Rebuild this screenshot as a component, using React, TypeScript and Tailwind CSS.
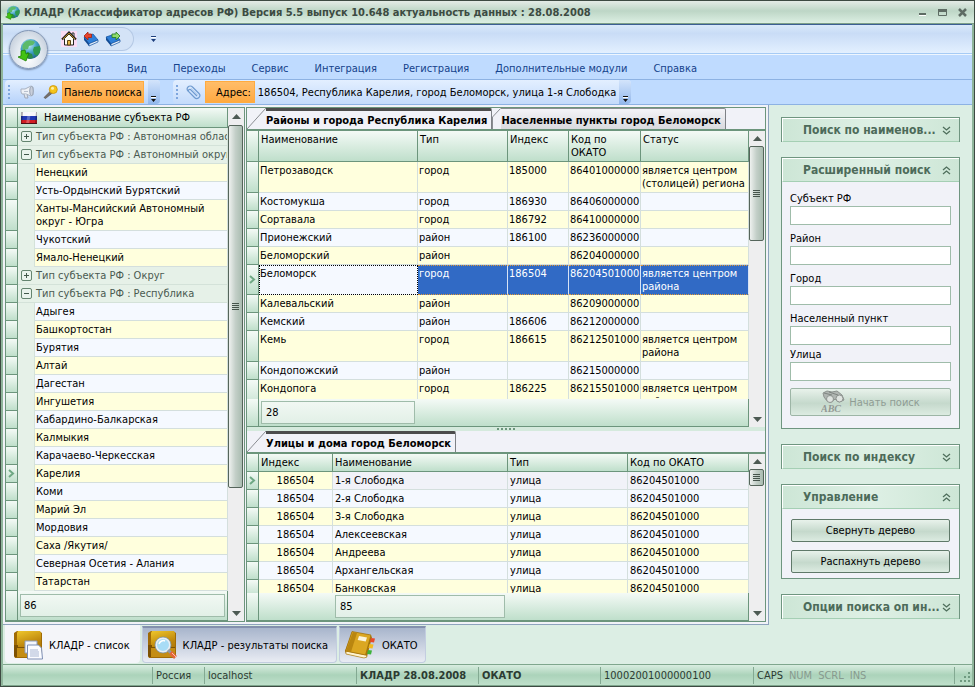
import type { ReactNode } from "react";
import clsx from "clsx";

const MENU = [
  "Работа",
  "Вид",
  "Переходы",
  "Сервис",
  "Интеграция",
  "Регистрация",
  "Дополнительные модули",
  "Справка",
];

type TreeRow = { group?: boolean; open?: boolean; current?: boolean; name: string };

const TREE: TreeRow[] = [
  { group: true, name: "Тип субъекта РФ : Автономная область" },
  { group: true, open: true, name: "Тип субъекта РФ : Автономный округ" },
  { name: "Ненецкий" },
  { name: "Усть-Ордынский Бурятский" },
  { name: "Ханты-Мансийский Автономный округ - Югра" },
  { name: "Чукотский" },
  { name: "Ямало-Ненецкий" },
  { group: true, name: "Тип субъекта РФ : Округ" },
  { group: true, open: true, name: "Тип субъекта РФ : Республика" },
  { name: "Адыгея" },
  { name: "Башкортостан" },
  { name: "Бурятия" },
  { name: "Алтай" },
  { name: "Дагестан" },
  { name: "Ингушетия" },
  { name: "Кабардино-Балкарская" },
  { name: "Калмыкия" },
  { name: "Карачаево-Черкесская" },
  { name: "Карелия", current: true },
  { name: "Коми" },
  { name: "Марий Эл" },
  { name: "Мордовия" },
  { name: "Саха /Якутия/" },
  { name: "Северная Осетия - Алания" },
  { name: "Татарстан" },
  { name: "" },
];

const CITIES = [
  ["Петрозаводск", "город", "185000", "86401000000", "является центром (столицей) региона"],
  ["Костомукша", "город", "186930", "86406000000", ""],
  ["Сортавала", "город", "186792", "86410000000", ""],
  ["Прионежский", "район", "186100", "86236000000", ""],
  ["Беломорский", "район", "", "86204000000", ""],
  ["Беломорск", "город", "186504", "86204501000", "является центром района"],
  ["Калевальский", "район", "", "86209000000", ""],
  ["Кемский", "район", "186606", "86212000000", ""],
  ["Кемь", "город", "186615", "86212501000", "является центром района"],
  ["Кондопожский", "район", "", "86215000000", ""],
  ["Кондопога", "город", "186225", "86215501000", "является центром района"],
];
const SELECTED_CITY = 5;

const STREETS = [
  "1-я Слободка",
  "2-я Слободка",
  "3-я Слободка",
  "Алексеевская",
  "Андреева",
  "Архангельская",
  "Банковская",
];

const HEAD = "bg-linear-to-b from-[#f4faf6] to-[#bfdfcb] border-[#6c957c]";

/* ---------- icons ---------- */

function Globe({ size }: { size: number }) {
  return (
    <svg width={size} height={size} viewBox="0 0 24 24" aria-hidden="true">
      <defs>
        <radialGradient id="sea" cx="0.4" cy="0.3" r="0.8">
          <stop offset="0" stopColor="#c8f0fa" />
          <stop offset="0.5" stopColor="#3f9fc4" />
          <stop offset="1" stopColor="#17577c" />
        </radialGradient>
      </defs>
      <circle cx="13.500" cy="11" r="10" fill="url(#sea)" />
      <path d="M7 5c3-4 8-3 11-1l-2 3-4 1-1 3-5 1c-1-3-1-5 1-7z" fill="#5cba6a" />
      <path d="M17 9l6-1c1 4 0 7-3 10l-3-2-1-4z" fill="#2f9a50" />
      <path d="M10 14l5 2 1 4-4 1-3-2z" fill="#2a8a49" />
      <path d="M4 13l4-1 1 4 3-1-3 8-8-4 3-1z" fill="#43c312" stroke="#208205" strokeWidth="0.8" />
    </svg>
  );
}

function HomeIcon() {
  return (
    <svg width="16" height="16" viewBox="0 0 16 16" aria-hidden="true">
      <path fill="#fadcf4" d="M0 0h16v16H0z" />
      <path d="M11 2h2v4h-2z" fill="#fff" stroke="#333" />
      <path d="M3.5 7.500L8 3l4.500 4.500v6.500h-9z" fill="#fffdf2" stroke="#222" />
      <path d="M1 8.500L8 1.500l7 7" fill="none" stroke="#222" strokeWidth="2" />
      <path d="M2 8.200L8 2.200l6 6" fill="none" stroke="#d39b25" strokeWidth="1" />
      <path d="M6.500 9.500h3V14h-3z" fill="#e8b74a" stroke="#5c4212" />
    </svg>
  );
}

function BookIcon({ forward }: { forward?: boolean }) {
  return (
    <svg width="16" height="16" viewBox="0 0 16 16" aria-hidden="true">
      <path d="M1 6l9-3 5 6-9 4z" fill="#2e7fd8" stroke="#0f4d9c" strokeWidth="0.7" />
      <path d="M1 6v3l5 6v-2.500z" fill="#124a93" />
      <path d="M6 12.700L15 9v2l-9 4z" fill="#e9f1fb" stroke="#0f4d9c" strokeWidth="0.7" />
      {forward ? (
        <path d="M7 3h4V1l4 4-4 4V6.500H7z" fill="#8fdc6d" stroke="#257c1d" strokeWidth="0.8" />
      ) : (
        <path d="M8.500 3H5V1L1 5l4 4V6.500h3.500z" fill="#e8432a" stroke="#a3230f" strokeWidth="0.8" />
      )}
    </svg>
  );
}

function MegaphoneIcon() {
  return (
    <svg width="15" height="14" viewBox="0 0 15 14" aria-hidden="true">
      <path d="M1 4h4l6-3 2 1v8l-2 1-5-2H2L1 7z" fill="#eef1f6" stroke="#a9b2c1" />
      <path d="M4 9l1 4h3L7 9.500" fill="#dfe4ec" stroke="#a0a9b9" />
      <ellipse cx="11.500" cy="6" rx="1.800" ry="4.500" fill="#c9cfdb" stroke="#98a3b5" />
      <path d="M4 6.500h4" stroke="#b9c1ce" />
    </svg>
  );
}

function MicrophoneIcon() {
  return (
    <svg width="15" height="15" viewBox="0 0 15 15" aria-hidden="true">
      <path d="M8 5.500l2 2L2.500 13.500 1 12.500z" fill="#77706a" stroke="#4b4540" strokeWidth="0.6" />
      <circle cx="10.300" cy="4.500" r="4" fill="#f4c51d" stroke="#cc9209" strokeWidth="0.8" />
      <circle cx="9.500" cy="3.300" r="1.500" fill="#fff0a4" />
    </svg>
  );
}

function ClipIcon() {
  return (
    <svg width="15" height="15" viewBox="0 0 15 15" aria-hidden="true">
      <path
        d="M11 11L4.500 4.500a1.500 1.500 0 0 0-2 2l6 6a3 3 0 0 0 4.500-4L6.500 2a3 3 0 0 0-4.500 0 3 3 0 0 0 0 4"
        fill="none"
        stroke="#6f9bd0"
        strokeWidth="1.200"
      />
      <path d="M5 3l7 7" stroke="#b9d3f0" />
    </svg>
  );
}

function FlagIcon() {
  return (
    <svg width="16" height="12" viewBox="0 0 16 12" aria-hidden="true">
      <path fill="#f6f6fa" d="M0 0h16v4H0z" />
      <path fill="#2038b4" d="M0 4h16v4H0z" />
      <path fill="#d21d24" d="M0 8h16v4H0z" />
      <path d="M0 0h2L1 12H0zM15 0h1v12h-2z" fill="#000" opacity="0.3" />
      <path d="M7 0h3L8 12H5z" fill="#fff" opacity="0.25" />
      <path d="M0 11.500h16" stroke="#4a1014" />
    </svg>
  );
}

function BoxIcon({ search }: { search?: boolean }) {
  return (
    <svg width="30" height="30" viewBox="0 0 30 30" aria-hidden="true">
      <defs>
        <linearGradient id="gold" x1="0" y1="0" x2="0.3" y2="1">
          <stop offset="0" stopColor="#efc62c" />
          <stop offset="0.600" stopColor="#bd860c" />
          <stop offset="1" stopColor="#a87208" />
        </linearGradient>
      </defs>
      <path d="M1 3l3-2h22l3 2v23l-2 2H2l-1-2z" fill="#a06b05" />
      <path d="M5 1h22l1 2v24H4V3z" fill="url(#gold)" />
      <path d="M1 15h4v12H2l-1-1zM4 17h24v1H4z" fill="#7d5103" />
      <path d="M4 18h24v9H4z" fill="#c48d14" />
      {search ? (
        <>
          <circle cx="16" cy="15" r="7" fill="#a8dcf6" stroke="#e9eef3" strokeWidth="2" />
          <circle cx="16" cy="15" r="8" fill="none" stroke="#6c8ba8" strokeWidth="0.700" />
          <path d="M12 14c1-3 4-4 6-3" fill="none" stroke="#fff" strokeWidth="1.500" />
          <path d="M21 20l3 3" stroke="#8e9aa8" strokeWidth="3" />
          <path d="M23.500 22.500l5 5" stroke="#e4663a" strokeWidth="4" />
          <path d="M25 23l4 4" stroke="#fbc3a6" />
        </>
      ) : (
        <>
          <path d="M12 11h12v12H12z" fill="#f4f7fd" stroke="#8d9dbd" />
          <path d="M14.500 15h11l3 3 1 11H14.500z" fill="#fbfcff" stroke="#7d8fb4" />
          <path d="M17 20h8M17 22h9M17 24h9M17 26h9" stroke="#a9b7d3" />
        </>
      )}
    </svg>
  );
}

function NotebookIcon() {
  return (
    <svg width="32" height="30" viewBox="0 0 32 30" aria-hidden="true">
      <path d="M8 2l18 3 2 2-5 20-3 1L2 24l-1-3z" fill="#a87508" />
      <path d="M2 21l20 4 1 2-3 1L2 24z" fill="#fff4cf" stroke="#a87508" strokeWidth="0.600" />
      <path d="M8 1.500L27 5l-5.500 20L1.500 21z" fill="#dba722" stroke="#9c6d08" strokeWidth="0.700" />
      <path d="M9 2l4 1-6 19-5-1z" fill="#b98610" />
      <path d="M15 6l8 1.500-1.300 4-8-1.500z" fill="#fbf4dc" />
      <path d="M27 8l4 .5-1 4-4-.5z" fill="#e8492b" />
      <path d="M25.500 14l4 .5-1 4-4-.5z" fill="#f3bb1f" />
      <path d="M24 20l4 .5-1 4-4-.5z" fill="#3eb33b" />
    </svg>
  );
}

function BinocularsIcon() {
  return (
    <svg width="24" height="24" viewBox="0 0 24 24" aria-hidden="true">
      <path d="M2 3l4-2 5 1 5-1 5 4 2 5-5 2-4-3-3 3-5-1-3-4z" fill="#b0b6b2" stroke="#8d938f" />
      <circle cx="9" cy="9" r="3.500" fill="#dfe4e0" stroke="#8d938f" />
      <circle cx="18.500" cy="8.500" r="3.500" fill="#dfe4e0" stroke="#8d938f" />
      <path d="M3 3l8 2M8 2l9 3" stroke="#7f8581" />
      <text x="0" y="22" fontSize="10" fontStyle="italic" fontFamily="Liberation Serif, serif" fontWeight="700" fill="#929894">
        ABC
      </text>
    </svg>
  );
}

function DoubleChevron({ up }: { up?: boolean }) {
  return (
    <svg width="9" height="9" viewBox="0 0 9 9" className={up ? undefined : "rotate-180"} aria-hidden="true">
      <path d="M1 4l3.500-3L8 4M1 8l3.500-3L8 8" fill="none" stroke="#4f6f5c" strokeWidth="1.300" />
    </svg>
  );
}

function OverflowMark({ color = "#111" }: { color?: string }) {
  return (
    <svg width="7" height="8" viewBox="0 0 7 8" aria-hidden="true">
      <path d="M1 2h5v1H1z" fill="#fff" />
      <path d="M1 1h5v1H1zM1 4h5L3.500 7z" fill={color} />
    </svg>
  );
}

function Marker() {
  return (
    <svg width="7" height="9" viewBox="0 0 7 9" className="mx-auto" aria-hidden="true">
      <path d="M1 1l4 3.500L1 8" fill="none" stroke="#6fa884" strokeWidth="2" />
    </svg>
  );
}

/* ---------- shared parts ---------- */

function ScrollBar({ thumb, compact }: { thumb: string; compact?: boolean }) {
  return (
    <div className="flex w-4 shrink-0 flex-col items-center bg-[#eeeeef]">
      <button
        type="button"
        aria-label="Вверх"
        className={clsx("flex w-full shrink-0 items-center justify-center", compact ? "h-[15px]" : "h-[17px]")}
      >
        <svg width="9" height="5" viewBox="0 0 9 5">
          <path d="M4.500 0L9 5H0z" fill="#4d5a53" />
        </svg>
      </button>
      <div className="min-h-0 w-full flex-1">
        <div
          className={clsx(
            "flex w-[15px] flex-col items-center justify-center gap-px rounded-xs border border-[#55655b] bg-linear-to-r from-[#eef1ef] via-[#c3cfc8] via-50% to-[#a9bcb0]",
            thumb
          )}
        >
          {[0, 1, 2, 3].map((i) => (
            <span key={i} className="h-px w-[7px] bg-[#46544c]" />
          ))}
        </div>
      </div>
      <button type="button" aria-label="Вниз" className="flex h-[15px] w-full shrink-0 items-center justify-center">
        <svg width="9" height="5" viewBox="0 0 9 5">
          <path d="M4.500 5L9 0H0z" fill="#4d5a53" />
        </svg>
      </button>
    </div>
  );
}

function Indicator({ current, short }: { current?: boolean; short?: boolean }) {
  return (
    <td className={clsx("border-r border-b p-0 align-middle", HEAD, short && "h-[18px]")}>
      {current && <Marker />}
    </td>
  );
}

function SlantTab({ active, first, children }: { active?: boolean; first?: boolean; children: ReactNode }) {
  return (
    <button type="button" className="flex h-[21px] items-stretch font-bold text-black">
      <svg
        width={first ? 19 : 9}
        height="21"
        viewBox={first ? "0 0 19 21" : "0 0 9 21"}
        className="shrink-0"
        aria-hidden="true"
      >
        {first ? (
          <path d="M0 21L19 0" stroke="#8a8d92" fill="none" />
        ) : (
          <path d="M0.500 21V9L8.500 0.500" stroke="#8a8d92" fill="none" />
        )}
      </svg>
      <span
        className={clsx(
          "flex items-center rounded-tr-xs border-r border-[#7e8186] pr-1 whitespace-nowrap",
          active
            ? "border-t-3 border-t-[#4c4c4c] bg-[#f1f2f8]"
            : "border-t border-t-[#8a8d92] bg-linear-to-b from-[#f4f4f8] to-[#d9dade] pt-0.5"
        )}
      >
        {children}
      </span>
    </button>
  );
}

function SidePanel({ title, open, children }: { title: string; open?: boolean; children?: ReactNode }) {
  return (
    <section className="border-x border-t border-[#6f9580]">
      <button
        type="button"
        aria-expanded={!!open}
        className="flex h-6 w-full items-center border-t border-l border-t-white border-l-white border-b border-b-[#a5cfb4] bg-linear-to-r from-[#cde6d6] via-[#def0e5] to-[#cde6d6] pr-2 pl-5 text-[12px] font-bold text-[#4d6b5a]"
      >
        <span className="min-w-0 flex-1 text-left whitespace-nowrap">{title}</span>
        <DoubleChevron up={open} />
      </button>
      {children}
    </section>
  );
}

function SearchField({ id, label, tight }: { id: string; label: string; tight?: boolean }) {
  return (
    <div className={clsx("flex flex-col", tight ? "pt-[3px]" : "pt-[7px]")}>
      <label htmlFor={id} className="h-[14px] text-black">
        {label}
      </label>
      <input id={id} type="text" className="h-[19px] w-full border border-[#9fbcaa] bg-white px-1 outline-none" />
    </div>
  );
}

const BTN = "rounded-xs border bg-linear-to-b from-[#e8f2eb] via-[#c5d9cc] via-55% to-[#dcebe1]";

function Grip() {
  return (
    <span className="flex flex-col gap-[2px]">
      {[0, 1, 2, 3].map((i) => (
        <span key={i} className="size-[2px] bg-[#7ea6de]" />
      ))}
    </span>
  );
}

/* ---------- regions ---------- */

function TitleBar() {
  return (
    <header className="flex h-6 shrink-0 items-center border-t border-b border-t-[#3d4a42] border-b-[#7d9f89] bg-linear-to-b from-[#e4ebe6] via-[#bdd6c6] via-45% to-[#dcefe3] pr-[7px] pl-1">
      <Globe size={15} />
      <h1 className="min-w-0 flex-1 truncate pl-1 text-[11px] font-bold text-[#3c4b42]">
        КЛАДР (Классификатор адресов РФ) Версия 5.5 выпуск 10.648 актуальность данных : 28.08.2008
      </h1>
      <div className="flex items-center gap-[11px]">
        <button type="button" aria-label="Свернуть">
          <svg width="9" height="9" viewBox="0 0 9 9">
            <path d="M1 5h7v2H1z" fill="#5e6c64" />
            <path d="M1 7.500h7" stroke="#fff" />
          </svg>
        </button>
        <button type="button" aria-label="Развернуть">
          <svg width="9" height="9" viewBox="0 0 9 9">
            <path d="M0.500 1.500h8v6h-8z" fill="none" stroke="#5e6c64" />
            <path d="M0 1h9v3H0z" fill="#5e6c64" />
          </svg>
        </button>
        <button type="button" aria-label="Закрыть">
          <svg width="9" height="9" viewBox="0 0 9 9">
            <path d="M1 1l7 7M8 1L1 8" stroke="#5e6c64" strokeWidth="2.500" />
          </svg>
        </button>
      </div>
    </header>
  );
}

function Ribbon() {
  const overflow =
    "flex h-6 w-3 items-end justify-center rounded-r-sm bg-linear-to-b from-[#d3e4fb] to-[#93b8ec] pb-px";
  return (
    <div className="relative shrink-0 border-t border-[#3c5f94] bg-[#bfdbff]">
      <div className="flex h-[29px] items-center border-b border-[#a6cbf5] bg-linear-to-b from-[#d9e9fb] via-[#c9dcf6] via-30% to-[#e3f0ff] pl-9">
        <div className="flex h-6 items-center gap-[6px] rounded-r-full border border-l-0 border-[#b4c8e4] bg-[#d4e3f7] pr-3 pl-[22px]">
          <button type="button" aria-label="Домой">
            <HomeIcon />
          </button>
          <button type="button" aria-label="Назад">
            <BookIcon />
          </button>
          <button type="button" aria-label="Вперёд">
            <BookIcon forward />
          </button>
        </div>
        <button type="button" aria-label="Настройка" className="ml-4">
          <OverflowMark color="#1e3f7d" />
        </button>
      </div>
      <nav className="flex h-[26px] items-center gap-[26px] border-t border-b border-t-[#eef6ff] border-b-[#8db2e3] pt-0.5 pl-[62px]">
        {MENU.map((item) => (
          <button key={item} type="button" className="whitespace-nowrap text-[#15428b]">
            {item}
          </button>
        ))}
      </nav>
      <div className="flex h-[25px] items-center gap-[13px] border-b border-[#8db2e3] pl-0.5">
        <div className="flex h-6 items-center rounded-sm bg-linear-to-b from-[#e3efff] to-[#b6d2fa] pl-[3px]">
          <Grip />
          <button type="button" aria-label="Объявление" className="ml-[10px]">
            <MegaphoneIcon />
          </button>
          <button type="button" aria-label="Запись" className="ml-2">
            <MicrophoneIcon />
          </button>
          <button
            type="button"
            className="ml-1 h-[22px] border border-[#ffab3f] bg-linear-to-b from-[#ffbd69] to-[#ffa940] px-px whitespace-nowrap text-black"
          >
            Панель поиска
          </button>
          <button type="button" aria-label="Ещё" className={clsx("ml-1", overflow)}>
            <OverflowMark />
          </button>
        </div>
        <div className="flex h-6 items-center rounded-sm bg-linear-to-b from-[#e3efff] to-[#c4dbfb] pl-[3px]">
          <Grip />
          <button type="button" aria-label="Вложение" className="ml-2">
            <ClipIcon />
          </button>
          <button
            type="button"
            className="ml-1 h-[22px] w-[50px] border border-[#ffab3f] bg-linear-to-b from-[#ffbd69] to-[#ffa940] pr-[3px] text-right text-black"
          >
            Адрес:
          </button>
          <span className="px-[3px] whitespace-nowrap text-black">
            186504, Республика Карелия, город Беломорск, улица 1-я Слободка
          </span>
          <button type="button" aria-label="Ещё" className={overflow}>
            <OverflowMark />
          </button>
        </div>
      </div>
      {/* application button sits over the quick access bar and the menu */}
      <button
        type="button"
        aria-label="Меню приложения"
        className="absolute top-[5px] left-[6px] flex size-[39px] items-center justify-center rounded-full border border-[#8296b4] bg-radial-[at_50%_70%] from-white via-[#dfe6ee] to-[#b4c0d0] shadow-[0_1px_2px_#7083a0]"
      >
        <Globe size={24} />
      </button>
    </div>
  );
}

function SubjectTree() {
  // the stripes run on across the groups
  const stripes = TREE.filter((row) => !row.group);
  return (
    <div className="flex w-[240px] shrink-0 border border-[#6c957c]">
      <div className="flex min-w-0 flex-1 flex-col">
        <div className="h-0 min-h-0 flex-1 overflow-hidden bg-[#e6f1e8]">
          <table className="w-full table-fixed border-separate border-spacing-0">
            <colgroup>
              <col className="w-3" />
              <col className="w-[17px]" />
              <col />
            </colgroup>
            <thead>
              <tr>
                <th className={clsx("h-5 border-r border-b p-0", HEAD)} />
                <th colSpan={2} className={clsx("border-r border-b p-0 font-normal", HEAD)}>
                  <span className="flex items-center gap-[7px] pl-[3px] whitespace-nowrap">
                    <FlagIcon />
                    Наименование субъекта РФ
                  </span>
                </th>
              </tr>
            </thead>
            <tbody>
              {TREE.map((row) =>
                row.group ? (
                  <tr key={row.name}>
                    <Indicator short />
                    <td colSpan={2} className="border-r border-b border-[#d4e2d9] p-0 text-[#4a5a51]">
                      <span className="flex items-center gap-1 overflow-hidden pl-[3px] whitespace-nowrap">
                        <button
                          type="button"
                          aria-label={row.open ? "Свернуть" : "Развернуть"}
                          className="flex size-[11px] shrink-0 items-center justify-center rounded-xs border border-[#64846f] bg-[#e9f3ec]"
                        >
                          <svg width="5" height="5" viewBox="0 0 5 5">
                            <path d={row.open ? "M0 2.500h5" : "M0 2.500h5M2.500 0v5"} stroke="#41584a" />
                          </svg>
                        </button>
                        {row.name}
                      </span>
                    </td>
                  </tr>
                ) : (
                  <tr key={row.name}>
                    <Indicator current={row.current} short />
                    <td className="border-r border-[#d4e2d9] p-0" />
                    <td
                      className={clsx(
                        "border-r border-b border-[#d4dfdd] py-[2px] pr-4 pl-px",
                        stripes.indexOf(row) % 2 === 0 ? "bg-[#ffffdd]" : "bg-[#f5f9ff]"
                      )}
                    >
                      {row.name}
                    </td>
                  </tr>
                )
              )}
            </tbody>
          </table>
        </div>
        <div className={clsx("flex h-[30px] shrink-0 border-r border-b", HEAD)}>
          <div className="w-3 border-r border-[#6c957c]" />
          <div className="my-[3px] mr-[2px] ml-[2px] flex flex-1 items-center border border-[#9fbcaa] bg-linear-to-b from-[#f1f8f3] to-[#e2f0e7] pl-[3px]">
            86
          </div>
        </div>
      </div>
      <ScrollBar thumb="h-[363px]" />
    </div>
  );
}

function CitiesGrid() {
  return (
    <div className="flex min-h-0 flex-1 border-t-2 border-[#6c957c]">
      <div className="flex min-w-0 flex-1 flex-col">
        <div className="h-0 min-h-0 flex-1 overflow-hidden">
          <table className="w-full table-fixed border-separate border-spacing-0">
            <colgroup>
              <col className="w-3" />
              <col />
              <col className="w-[90px]" />
              <col className="w-[61px]" />
              <col className="w-[72px]" />
              <col className="w-[108px]" />
            </colgroup>
            <thead>
              <tr>
                <th className={clsx("border-r border-b p-0", HEAD)} />
                {["Наименование", "Тип", "Индекс", "Код по ОКАТО", "Статус"].map((h) => (
                  <th
                    key={h}
                    className={clsx("h-[31px] border-r border-b py-[2px] pr-2 pl-[2px] text-left align-top font-normal", HEAD)}
                  >
                    {h}
                  </th>
                ))}
              </tr>
            </thead>
            <tbody>
              {CITIES.map((row, i) => {
                const selected = i === SELECTED_CITY;
                return (
                  <tr key={row[0]}>
                    <Indicator current={selected} />
                    {row.map((value, c) => (
                      <td
                        key={c}
                        className={clsx(
                          "align-top",
                          selected
                            ? "border-y py-px [border-bottom-style:dotted] [border-top-style:dotted]"
                            : "border-r border-b border-[#d4dfdd] py-[2px] pl-px",
                          selected && c > 0 && "border-r border-y-[#e39a35] border-r-[#d8e3f5] bg-[#316ac5] pl-px text-white",
                          selected && c === 0 && "border-x border-dotted border-black bg-[#f5f9ff]",
                          !selected && (i % 2 === 0 ? "bg-[#ffffdd]" : "bg-[#f5f9ff]"),
                          c === 3 && "whitespace-nowrap"
                        )}
                      >
                        {value}
                      </td>
                    ))}
                  </tr>
                );
              })}
            </tbody>
          </table>
        </div>
        <div className={clsx("flex h-7 shrink-0 border-r border-b", HEAD)}>
          <div className="w-3 border-r border-[#6c957c]" />
          <div className="mt-[2px] mb-[2px] ml-[2px] flex w-[154px] items-center border border-[#9fbcaa] bg-linear-to-b from-[#f1f8f3] to-[#e2f0e7] pl-1">
            28
          </div>
        </div>
      </div>
      <ScrollBar thumb="h-[95px]" compact />
    </div>
  );
}

function StreetsGrid() {
  return (
    <div className="flex min-h-0 flex-1 border-t-2 border-[#6c957c]">
      <div className="flex min-w-0 flex-1 flex-col">
        <div className="h-0 min-h-0 flex-1 overflow-hidden">
          <table className="w-full table-fixed border-separate border-spacing-0">
            <colgroup>
              <col className="w-3" />
              <col className="w-[74px]" />
              <col />
              <col className="w-[120px]" />
              <col className="w-[121px]" />
            </colgroup>
            <thead>
              <tr>
                <th className={clsx("border-r border-b p-0", HEAD)} />
                {["Индекс", "Наименование", "Тип", "Код по ОКАТО"].map((h) => (
                  <th key={h} className={clsx("border-r border-b py-[2px] pl-[2px] text-left font-normal", HEAD)}>
                    {h}
                  </th>
                ))}
              </tr>
            </thead>
            <tbody>
              {STREETS.map((street, i) => (
                <tr key={street}>
                  <Indicator current={i === 0} />
                  {["186504", street, "улица", "86204501000"].map((value, c) => (
                    <td
                      key={c}
                      className={clsx(
                        "border-r border-b border-[#d4dfdd] py-[2px]",
                        c === 0 ? "text-center" : "pl-[2px]",
                        i === 0 && c > 0 ? "bg-[#f1f2f8]" : i % 2 === 0 ? "bg-[#ffffdd]" : "bg-[#f5f9ff]"
                      )}
                    >
                      {value}
                    </td>
                  ))}
                </tr>
              ))}
            </tbody>
          </table>
        </div>
        <div className={clsx("flex h-7 shrink-0 border-r border-b", HEAD)}>
          <div className="w-3 border-r border-[#6c957c]" />
          <div className="mt-[2px] mb-[2px] ml-[76px] flex w-[170px] items-center border border-[#9fbcaa] bg-linear-to-b from-[#f1f8f3] to-[#e2f0e7] pl-1">
            85
          </div>
        </div>
      </div>
      <ScrollBar thumb="h-[17px]" compact />
    </div>
  );
}

function Sidebar() {
  return (
    <aside className="flex w-[203px] shrink-0 flex-col gap-[15px] px-3 pt-3">
      <SidePanel title="Поиск по наименов..." />
      <SidePanel title="Расширенный поиск" open>
        <form className="border-b border-[#6f9580] bg-[#f1f2f8] px-2 pt-[3px] pb-3">
          <SearchField id="subject" label="Субъект РФ" />
          <SearchField id="district" label="Район" />
          <SearchField id="city" label="Город" />
          <SearchField id="place" label="Населенный пункт" />
          <SearchField id="street" label="Улица" tight />
          <button
            type="button"
            disabled
            className={clsx("mt-[7px] flex h-[28px] w-full items-center justify-center gap-1 border-[#9db5a6] text-[#8f9c94]", BTN)}
          >
            <BinocularsIcon />
            Начать поиск
          </button>
        </form>
      </SidePanel>
      <SidePanel title="Поиск по индексу" />
      <SidePanel title="Управление" open>
        <div className="flex flex-col gap-2 border-b border-[#6f9580] bg-[#f1f2f8] px-[9px] pt-[10px] pb-[5px]">
          <button type="button" className={clsx("h-[23px] border-[#5f7969] text-black", BTN)}>
            Свернуть дерево
          </button>
          <button type="button" className={clsx("h-[23px] border-[#5f7969] text-black", BTN)}>
            Распахнуть дерево
          </button>
        </div>
      </SidePanel>
      <SidePanel title="Опции поиска оп ин..." />
    </aside>
  );
}

function PageTabs() {
  const idle =
    "mt-px flex h-[37px] items-center gap-[6px] rounded-b-sm border border-t-2 border-[#c3cde0] border-t-[#8390ad] bg-linear-to-b from-[#a8b5cc] to-[#e9ecf3] pr-2 pl-1";
  return (
    <div className="flex h-[39px] shrink-0 items-start gap-[2px] pl-0.5">
      <button type="button" className="flex h-[38px] items-center gap-[6px] rounded-b-sm bg-[#f4f5f9] pt-0.5 pr-[10px] pl-2">
        <BoxIcon />
        КЛАДР - список
      </button>
      <button type="button" className={idle}>
        <BoxIcon search />
        КЛАДР - результаты поиска
      </button>
      <button type="button" className={idle}>
        <NotebookIcon />
        ОКАТО
      </button>
    </div>
  );
}

function StatusBar() {
  const cell = "flex h-[17px] items-center border-l border-[#83a992] pl-[3px] whitespace-nowrap";
  return (
    <footer className="flex h-[22px] shrink-0 items-center border-t border-b border-[#7fa68d] bg-linear-to-b from-[#d8ede0] via-[#abd3ba] via-50% to-[#bfe0cb] text-[#2c3b32]">
      <div className="w-[149px]" />
      <div className={clsx("w-[52px]", cell)}>Россия</div>
      <div className={clsx("w-[152px]", cell)}>localhost</div>
      <div className={clsx("w-[122px] font-bold", cell)}>КЛАДР 28.08.2008</div>
      <div className={clsx("w-[122px] font-bold", cell)}>ОКАТО</div>
      <div className={clsx("w-[153px]", cell)}>10002001000000100</div>
      <div className={clsx("flex-1 gap-[6px]", cell)}>
        CAPS
        <span className="text-[#879a8e]">NUM</span>
        <span className="text-[#879a8e]">SCRL</span>
        <span className="text-[#879a8e]">INS</span>
      </div>
      <div className="flex h-[17px] items-end border-l border-[#83a992] pl-1">
        <svg width="13" height="13" viewBox="0 0 13 13" aria-hidden="true">
          <path
            d="M9 1h2v2H9zM5 5h2v2H5zM9 5h2v2H9zM1 9h2v2H1zM5 9h2v2H5zM9 9h2v2H9z"
            fill="#6f9a80"
          />
        </svg>
      </div>
    </footer>
  );
}

export default function App() {
  return (
    <div className="flex h-screen flex-col overflow-hidden border-x border-b border-[#3d4a42] bg-[#dceee4] font-['DejaVu_Sans_Condensed','DejaVu_Sans',sans-serif] text-[11px] leading-[13px] text-black">
      <TitleBar />
      <div className="flex min-h-0 flex-1 flex-col border-x-2 border-[#8fb59b]">
        <Ribbon />
        <main className="flex min-h-0 flex-1">
          <div className="flex min-w-0 flex-1 gap-px border-r border-b border-[#8ea3bd] bg-[#f1f2f8] p-0.5">
            <SubjectTree />
            <div className="flex min-w-0 flex-1 flex-col border border-[#6c957c] bg-[#f1f2f8]">
              <div className="flex shrink-0">
                <SlantTab active first>
                  Районы и города Республика Карелия
                </SlantTab>
                <SlantTab>Населенные пункты город Беломорск</SlantTab>
              </div>
              <CitiesGrid />
              <div className="flex h-1 shrink-0 items-center justify-center gap-[2px] bg-[#d5eadd]">
                {[0, 1, 2, 3, 4].map((i) => (
                  <span key={i} className="h-[2px] w-[2px] bg-[#6c957c]" />
                ))}
              </div>
              <div className="flex h-[190px] shrink-0 flex-col">
                <div className="flex shrink-0">
                  <SlantTab active first>
                    Улицы и дома город Беломорск
                  </SlantTab>
                </div>
                <StreetsGrid />
              </div>
            </div>
          </div>
          <Sidebar />
        </main>
        <PageTabs />
        <StatusBar />
      </div>
    </div>
  );
}
